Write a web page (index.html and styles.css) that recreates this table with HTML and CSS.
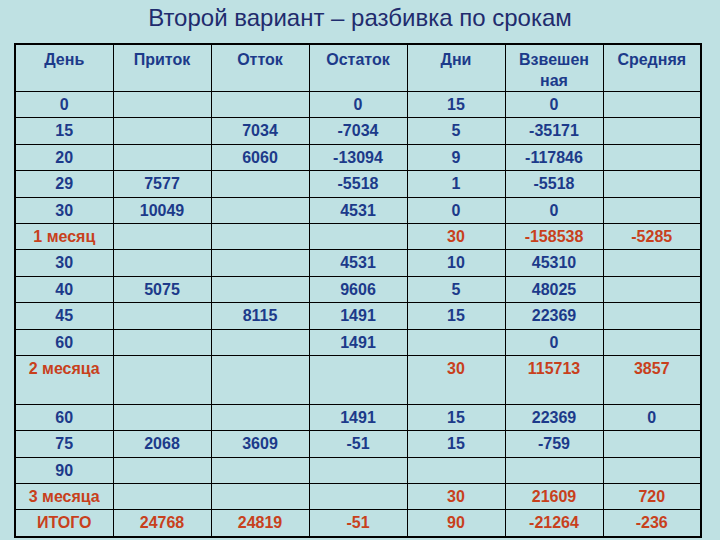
FILE: index.html
```html
<!DOCTYPE html>
<html lang="ru">
<head>
<meta charset="utf-8">
<title>Второй вариант – разбивка по срокам</title>
<link rel="stylesheet" href="styles.css">
</head>
<body>
<h1 class="title">Второй вариант – разбивка по срокам</h1>
<table class="grid">
  <colgroup>
    <col class="c"><col class="c"><col class="c"><col class="c"><col class="c"><col class="c"><col class="c">
  </colgroup>
  <thead>
    <tr class="head">
      <th>День</th><th>Приток</th><th>Отток</th><th>Остаток</th><th>Дни</th><th>Взвешен<br>ная</th><th>Средняя</th>
    </tr>
  </thead>
  <tbody>
    <tr><td>0</td><td></td><td></td><td>0</td><td>15</td><td>0</td><td></td></tr>
    <tr><td>15</td><td></td><td>7034</td><td>-7034</td><td>5</td><td>-35171</td><td></td></tr>
    <tr><td>20</td><td></td><td>6060</td><td>-13094</td><td>9</td><td>-117846</td><td></td></tr>
    <tr><td>29</td><td>7577</td><td></td><td>-5518</td><td>1</td><td>-5518</td><td></td></tr>
    <tr><td>30</td><td>10049</td><td></td><td>4531</td><td>0</td><td>0</td><td></td></tr>
    <tr class="sum"><td>1 месяц</td><td></td><td></td><td></td><td>30</td><td>-158538</td><td>-5285</td></tr>
    <tr><td>30</td><td></td><td></td><td>4531</td><td>10</td><td>45310</td><td></td></tr>
    <tr><td>40</td><td>5075</td><td></td><td>9606</td><td>5</td><td>48025</td><td></td></tr>
    <tr><td>45</td><td></td><td>8115</td><td>1491</td><td>15</td><td>22369</td><td></td></tr>
    <tr><td>60</td><td></td><td></td><td>1491</td><td></td><td>0</td><td></td></tr>
    <tr class="sum tall"><td>2 месяца</td><td></td><td></td><td></td><td>30</td><td>115713</td><td>3857</td></tr>
    <tr><td>60</td><td></td><td></td><td>1491</td><td>15</td><td>22369</td><td>0</td></tr>
    <tr><td>75</td><td>2068</td><td>3609</td><td>-51</td><td>15</td><td>-759</td><td></td></tr>
    <tr><td>90</td><td></td><td></td><td></td><td></td><td></td><td></td></tr>
    <tr class="sum"><td>3 месяца</td><td></td><td></td><td></td><td>30</td><td>21609</td><td>720</td></tr>
    <tr class="sum"><td>ИТОГО</td><td>24768</td><td>24819</td><td>-51</td><td>90</td><td>-21264</td><td>-236</td></tr>
  </tbody>
</table>
</body>
</html>
```

FILE: styles.css
```css
html, body {
  margin: 0;
  padding: 0;
  background: #bfe1e3;
}
body {
  width: 720px;
  height: 540px;
  overflow: hidden;
  font-family: "Liberation Sans", Arial, sans-serif;
}
.title {
  margin: 0;
  padding-top: 4px;
  height: 39px;
  line-height: 28px;
  font-size: 24px;
  font-weight: normal;
  color: #1f2c6e;
  text-align: center;
}
.grid {
  margin-left: 14px;
  border-collapse: collapse;
  table-layout: fixed;
  width: 687px;
  border: 2px solid #000;
}
.grid .c {
  width: 98px;
}
.grid th,
.grid td {
  border: 1px solid #000;
  padding: 3px 0 0 0;
  vertical-align: top;
  text-align: center;
  font-size: 16px;
  font-weight: bold;
  line-height: 20px;
  color: #1c3a8a;
  height: 22.4px;
}
.grid th {
  height: 42px;
  line-height: 21px;
  padding-top: 4px;
}
.grid tr.sum td {
  color: #c8401c;
}
.grid tr.tall td {
  height: 45px;
}
```
